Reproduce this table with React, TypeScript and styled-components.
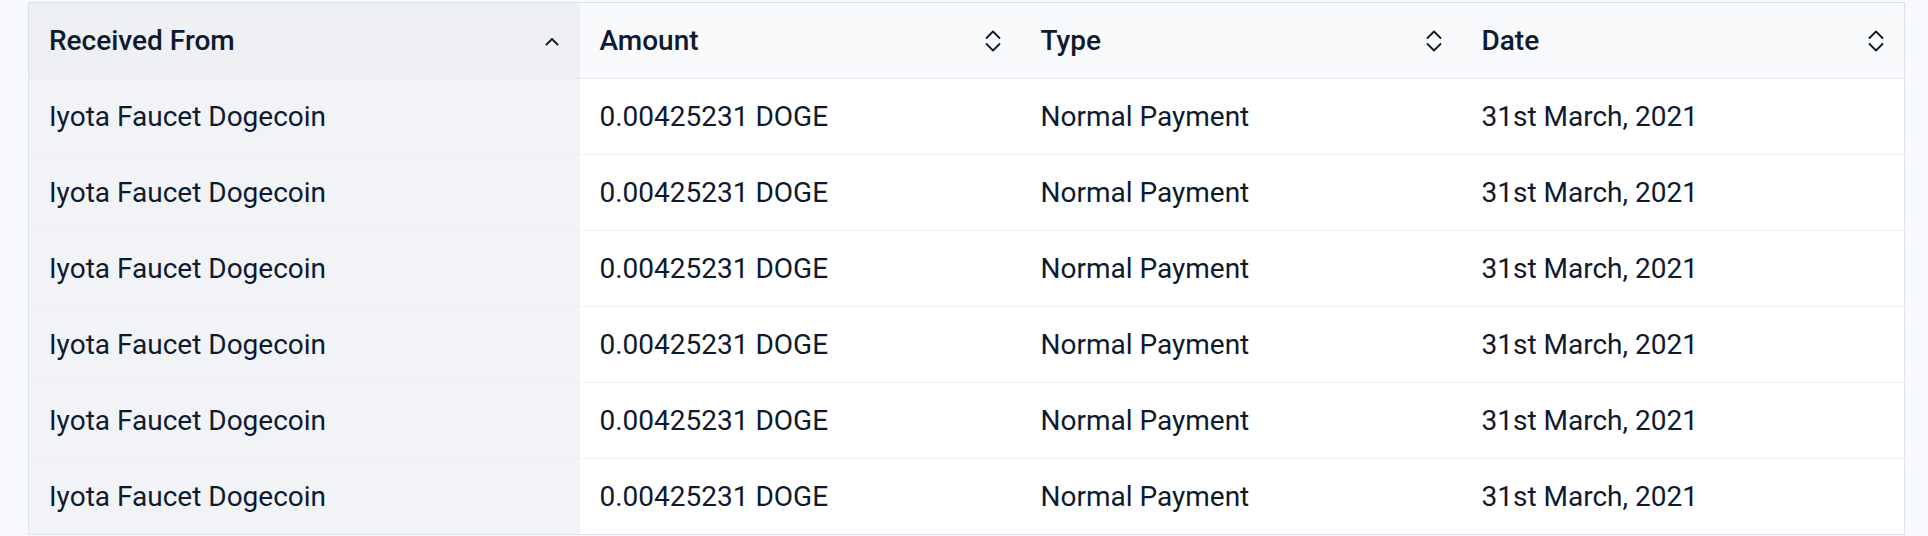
import React from "react";
import styled, { createGlobalStyle } from "styled-components";

const GlobalStyle = createGlobalStyle`
  html, body {
    margin: 0;
    padding: 0;
    background: #f8f9fc;
  }
  body {
    font-family: Roboto, "Liberation Sans", sans-serif;
    color: #0f1a2e;
  }
`;

const Page = styled.div`
  padding: 2px 23px 0 28px;
`;

const Table = styled.table`
  width: 100%;
  border-collapse: collapse;
  table-layout: fixed;
  border: 1px solid #dde2ea;
  background: #ffffff;
`;

const HeadCell = styled.th<{ $sorted?: boolean }>`
  height: 75px;
  padding: 0 20px;
  text-align: left;
  background: ${(p) => (p.$sorted ? "#eef0f4" : "#f8fafc")};
  border-bottom: 1px solid #e6eaf0;
  font-size: 28px;
  font-weight: 500;
  color: #0f1a2e;
`;

const HeadInner = styled.div`
  display: flex;
  align-items: center;
  justify-content: space-between;
`;

const Cell = styled.td<{ $sorted?: boolean }>`
  height: 75px;
  padding: 0 20px;
  background: ${(p) => (p.$sorted ? "#f1f3f7" : "#ffffff")};
  border-bottom: 1px solid #edf0f4;
  font-size: 28px;
  font-weight: 400;
  color: #0f1a2e;
  white-space: nowrap;
`;

const Row = styled.tr`
  &:last-child td {
    border-bottom: none;
  }
`;

const SortIcon = styled.svg`
  display: block;
  flex: none;
  color: #0f1a2e;
`;

const SortBoth = () => (
  <SortIcon width="16" height="24" viewBox="0 0 16 24" fill="none" stroke="currentColor" strokeWidth="1.8" strokeLinecap="round" strokeLinejoin="round">
    <path d="M1.5 9 L8 2.5 L14.5 9" />
    <path d="M1.5 15 L8 21.5 L14.5 15" />
  </SortIcon>
);

const SortUp = () => (
  <SortIcon width="16" height="24" viewBox="0 0 16 24" fill="none" stroke="currentColor" strokeWidth="1.8" strokeLinecap="round" strokeLinejoin="round">
    <path d="M2.5 15.5 L8 10 L13.5 15.5" />
  </SortIcon>
);

const columns = [
  { label: "Received From", width: 551, sorted: true },
  { label: "Amount", width: 441 },
  { label: "Type", width: 441 },
  { label: "Date" },
];

const rows = Array.from({ length: 6 }, () => ({
  from: "Iyota Faucet Dogecoin",
  amount: "0.00425231 DOGE",
  type: "Normal Payment",
  date: "31st March, 2021",
}));

export default function App() {
  return (
    <>
      <GlobalStyle />
      <Page>
        <Table>
          <colgroup>
            {columns.map((c) => (
              <col key={c.label} style={c.width ? { width: c.width } : undefined} />
            ))}
          </colgroup>
          <thead>
            <tr>
              {columns.map((c) => (
                <HeadCell key={c.label} $sorted={c.sorted}>
                  <HeadInner>
                    <span>{c.label}</span>
                    {c.sorted ? <SortUp /> : <SortBoth />}
                  </HeadInner>
                </HeadCell>
              ))}
            </tr>
          </thead>
          <tbody>
            {rows.map((r, i) => (
              <Row key={i}>
                <Cell $sorted>{r.from}</Cell>
                <Cell>{r.amount}</Cell>
                <Cell>{r.type}</Cell>
                <Cell>{r.date}</Cell>
              </Row>
            ))}
          </tbody>
        </Table>
      </Page>
    </>
  );
}
